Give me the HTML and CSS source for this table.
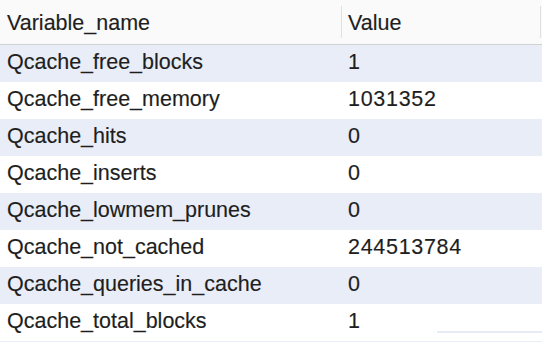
FILE: index.html
```html
<!DOCTYPE html>
<html>
<head>
<meta charset="utf-8">
<link rel="stylesheet" href="styles.css">
</head>
<body>
<div class="table">
  <div class="head">
    <div class="hcell name">Variable_name</div>
    <div class="hcell value">Value</div>
  </div>
  <div class="row alt"><div class="cell name">Qcache_free_blocks</div><div class="cell value">1</div></div>
  <div class="row"><div class="cell name">Qcache_free_memory</div><div class="cell value">1031352</div></div>
  <div class="row alt"><div class="cell name">Qcache_hits</div><div class="cell value">0</div></div>
  <div class="row"><div class="cell name">Qcache_inserts</div><div class="cell value">0</div></div>
  <div class="row alt"><div class="cell name">Qcache_lowmem_prunes</div><div class="cell value">0</div></div>
  <div class="row"><div class="cell name">Qcache_not_cached</div><div class="cell value">244513784</div></div>
  <div class="row alt"><div class="cell name">Qcache_queries_in_cache</div><div class="cell value">0</div></div>
  <div class="row"><div class="cell name">Qcache_total_blocks</div><div class="cell value">1</div></div>
  <div class="row alt stub"></div>
</div>
<div class="scroll"></div>
</body>
</html>
```
FILE: styles.css
```css
html, body {
  margin: 0;
  padding: 0;
  background: #ffffff;
  overflow: hidden;
  width: 542px;
  height: 342px;
}
body {
  position: relative;
  font-family: "Liberation Sans", Arial, sans-serif;
  font-size: 21.5px;
  color: #1e1e1e;
  -webkit-text-stroke: 0.15px #1e1e1e;
}
.table {
  display: flex;
  flex-direction: column;
}
.head {
  display: grid;
  grid-template-columns: 341px 1fr;
  height: 44px;
  background: #fafafa;
  border-bottom: 1px solid #d2d2d2;
}
.hcell {
  display: flex;
  align-items: center;
  padding-left: 7px;
  padding-top: 3px;
  box-sizing: border-box;
}
.hcell.value {
  position: relative;
  padding-left: 7px;
}
.hcell.value::before,
.hcell.value::after {
  content: "";
  position: absolute;
  top: 6px;
  bottom: 6px;
  width: 1px;
  background: #e0e0e0;
}
.hcell.value::before { left: 0; }
.hcell.value::after { right: 1px; }
.row {
  display: grid;
  grid-template-columns: 341px 1fr;
  height: 37px;
  flex: none;
}
.row.alt {
  background: #e9edf7;
}
.row.stub {
  height: 1px;
}
.cell {
  display: flex;
  align-items: center;
  padding-bottom: 2px;
  box-sizing: border-box;
  white-space: nowrap;
}
.cell.name {
  padding-left: 7px;
}
.cell.value {
  padding-left: 7px;
  letter-spacing: 0.7px;
}
.scroll {
  position: absolute;
  left: 437px;
  right: 0;
  top: 331px;
  height: 2px;
  background: #e6ebf6;
}
```
